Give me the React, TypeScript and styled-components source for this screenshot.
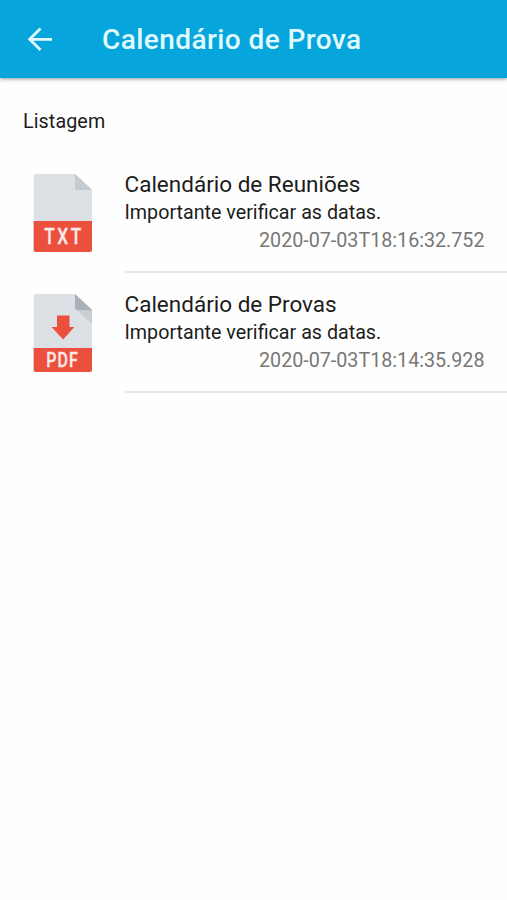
import React from 'react';
import styled, { createGlobalStyle } from 'styled-components';

const GlobalStyle = createGlobalStyle`
  * { box-sizing: border-box; }
  body {
    margin: 0;
    background: #fefefe;
    font-family: Roboto, "Liberation Sans", sans-serif;
    color: #1c1c1c;
  }
  h1, h2, h3, p, ul { margin: 0; padding: 0; font-weight: 400; }
`;

const Screen = styled.div`
  min-height: 100vh;
  overflow: hidden;
`;

const AppBar = styled.header`
  display: flex;
  align-items: center;
  height: 78px;
  padding-left: 26px;
  background: #06a5dc;
  box-shadow: 0 1px 4px rgba(0, 0, 0, 0.4);
`;

const BackButton = styled.button`
  display: flex;
  padding: 0;
  margin-right: 48px;
  border: 0;
  background: none;
`;

const Title = styled.h1`
  padding-top: 2px;
  font-size: 28px;
  line-height: 34px;
  font-weight: 500;
  letter-spacing: 0.42px;
  color: #e0fbff;
  white-space: nowrap;
`;

const SectionLabel = styled.h2`
  padding: 32px 0 0 23px;
  font-size: 19.7px;
  line-height: 24px;
  letter-spacing: 0.1px;
`;

const List = styled.ul`
  list-style: none;
  margin-top: 19px;
`;

const Row = styled.li`
  display: flex;
  height: 120px;
  padding-left: 33px;
`;

const IconSlot = styled.div`
  width: 91.5px;
  padding-top: 21px;
`;

const Details = styled.div`
  flex: 1;
  height: 120px;
  padding: 17px 22.5px 0 0;
  border-bottom: 2px solid #e6e6e6;
  white-space: nowrap;
`;

const ItemTitle = styled.h3`
  font-size: 22.5px;
  line-height: 28px;
`;

const ItemText = styled.p`
  padding-top: 2px;
  font-size: 19.7px;
  line-height: 26px;
`;

const ItemDate = styled.p`
  padding-top: 1px;
  font-size: 19.7px;
  line-height: 28px;
  text-align: right;
  color: #777;
`;

const BackArrow = () => (
  <svg width="28" height="26" viewBox="0 0 28 26" fill="none" stroke="#e0fbff" strokeWidth="2.8">
    <path d="M26 13.300H4M14.500 2.500L3.700 13.300l10.800 10.800" />
  </svg>
);

type FileKind = 'TXT' | 'PDF';

const FileIcon = ({ kind }: { kind: FileKind }) => {
  const pdf = kind === 'PDF';
  const bandTop = pdf ? 54 : 47;
  return (
    <svg width="60" height="79" viewBox="0 0 60 79" role="img" aria-label={kind}>
      <path d="M3.200 0H42l17 15.500V75.500a2.500 2.500 0 0 1-2.500 2.500H3.200A2.500 2.500 0 0 1 .7 75.500V2.500A2.500 2.500 0 0 1 3.200 0Z" fill="#dce0e4" />
      {pdf && <path d="M43.500 15.500H59V30Z" fill="#c7cdd2" />}
      <path d="M42 0l17 16H44.500A2.500 2.500 0 0 1 42 13.500Z" fill={pdf ? '#a9b0b7' : '#c3cad0'} />
      <path d={`M.7 ${bandTop}H59V75.500a2.500 2.500 0 0 1-2.500 2.500H3.200A2.500 2.500 0 0 1 .7 75.500Z`} fill="#eb503f" />
      {pdf && <path d="M24 21.500h12.500V33h4.800L30.200 45.500 18.500 33H24Z" fill="#eb503f" />}
      <text
        transform={pdf ? 'translate(13.3 73) scale(.82 1)' : 'translate(11.3 69.700) scale(.8 1)'}
        letterSpacing={pdf ? 1.2 : 3.2}
        fontFamily="Roboto, sans-serif"
        fontSize={pdf ? 19.5 : 21.5}
        fontWeight="500"
        fill="#fbeae6"
        stroke="#fbeae6"
        strokeWidth=".3"
      >
        {kind}
      </text>
    </svg>
  );
};

const items: { kind: FileKind; title: string; text: string; date: string }[] = [
  { kind: 'TXT', title: 'Calendário de Reuniões', text: 'Importante verificar as datas.', date: '2020-07-03T18:16:32.752' },
  { kind: 'PDF', title: 'Calendário de Provas', text: 'Importante verificar as datas.', date: '2020-07-03T18:14:35.928' },
];

export default function App() {
  return (
    <Screen>
      <GlobalStyle />
      <AppBar>
        <BackButton aria-label="Voltar">
          <BackArrow />
        </BackButton>
        <Title>Calendário de Prova</Title>
      </AppBar>
      <main>
        <SectionLabel>Listagem</SectionLabel>
        <List>
          {items.map((item) => (
            <Row key={item.date}>
              <IconSlot>
                <FileIcon kind={item.kind} />
              </IconSlot>
              <Details>
                <ItemTitle>{item.title}</ItemTitle>
                <ItemText>{item.text}</ItemText>
                <ItemDate>{item.date}</ItemDate>
              </Details>
            </Row>
          ))}
        </List>
      </main>
    </Screen>
  );
}
